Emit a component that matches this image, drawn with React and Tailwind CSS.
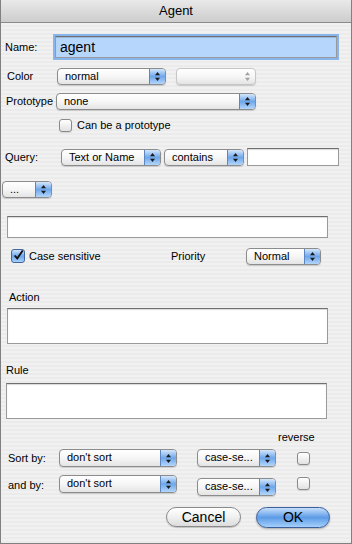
import React from "react";

function Arrows({ dim }) {
  const c = dim ? "#a0a0a0" : "#1a1a1a";
  return (
    <svg width="7" height="11" viewBox="0 0 7 11">
      <path d="M3.5 1 L6 4.2 L1 4.2 Z" fill={c} />
      <path d="M3.5 10 L6 6.8 L1 6.8 Z" fill={c} />
    </svg>
  );
}

function Popup({ label, w, h = "h-[17px]", disabled }) {
  return (
    <div className={`flex ${w} ${h} items-stretch overflow-hidden rounded-[4px] border ${disabled ? "border-[#c6c6c6]" : "border-[#8c8c8c]"} bg-gradient-to-b from-white via-[#f6f6f6] to-[#e4e4e4] shadow-[0_1px_1px_rgba(0,0,0,0.15)]`}>
      <span className="flex-1 truncate pl-[7px] text-[11px] leading-[15px] text-black">{label}</span>
      {disabled ? (
        <span className="flex w-[16px] items-center justify-center"><Arrows dim /></span>
      ) : (
        <span className="flex w-[16px] items-center justify-center border-l border-[#5b86c2] bg-gradient-to-b from-[#d4e7fb] via-[#6ea6ea] to-[#b3d6fb]"><Arrows /></span>
      )}
    </div>
  );
}

function Field({ w, h, children, focus }) {
  return (
    <div className={`${w} ${h} border border-[#9a9a9a] border-t-[#6f6f6f] ${focus ? "bg-[#b6d6fc] outline outline-2 outline-[#88b6ec]" : "bg-white"} shadow-[inset_0_1px_1px_rgba(0,0,0,0.15)]`}>
      {children}
    </div>
  );
}

function Check({ checked }) {
  return checked ? (
    <div className="flex h-[14px] w-[14px] items-center justify-center rounded-[3px] border border-[#40679c] bg-gradient-to-b from-[#cfe4fb] via-[#6ca5ea] to-[#a9d0fb]">
      <svg width="13" height="13" viewBox="0 0 13 13" className="-mt-[2px] ml-[1px]">
        <path d="M2 6.5 L5 10 L11.5 0.5" stroke="#111" strokeWidth="2.2" fill="none" />
      </svg>
    </div>
  ) : (
    <div className="h-[13px] w-[13px] rounded-[3px] border border-[#8a8a8a] bg-gradient-to-b from-white to-[#e2e2e2] shadow-[0_1px_1px_rgba(0,0,0,0.12)]" />
  );
}

export default function App() {
  return (
    <div className="h-[544px] w-[352px] overflow-hidden border-x border-b border-[#808080] bg-[repeating-linear-gradient(0deg,#ebebeb_0px,#ebebeb_2px,#f1f1f1_2px,#f1f1f1_4px)] font-['Liberation_Sans',Arial,sans-serif] text-[11px] text-black">
      <div className="flex h-[23px] items-center justify-center border-b border-[#8a8a8a] bg-gradient-to-b from-[#e9e9e9] to-[#cdcdcd] text-[13px]">
        Agent
      </div>

      <div className="mt-[11px] flex h-[26px] items-center">
        <span className="w-[54px] pl-[4px]">Name:</span>
        <Field w="w-[282px]" h="h-[22px]" focus>
          <span className="pl-[4px] text-[14px] leading-[20px]">agent</span>
        </Field>
      </div>

      <div className="mt-[6px] flex h-[20px] items-center">
        <span className="w-[56px] pl-[6px]">Color</span>
        <Popup label="normal" w="w-[109px]" />
        <div className="ml-[10px]"><Popup label="" w="w-[80px]" disabled /></div>
      </div>

      <div className="mt-[5px] flex h-[20px] items-center">
        <span className="w-[55px] pl-[5px]">Prototype</span>
        <Popup label="none" w="w-[200px]" />
      </div>

      <div className="mt-[4px] flex h-[20px] items-center pl-[58px]">
        <Check />
        <span className="ml-[5px]">Can be a prototype</span>
      </div>

      <div className="mt-[12px] flex h-[20px] items-center">
        <span className="w-[55px] pl-[4px]">Query:</span>
        <div className="ml-[5px]"><Popup label="Text or Name" w="w-[100px]" /></div>
        <div className="ml-[3px]"><Popup label="contains" w="w-[80px]" /></div>
        <div className="ml-[3px]"><Field w="w-[92px]" h="h-[18px]" /></div>
      </div>

      <div className="mt-[12px] flex h-[20px] items-center pl-[1px]">
        <Popup label="..." w="w-[50px]" />
      </div>

      <div className="mt-[17px] flex h-[22px] pl-[6px]">
        <Field w="w-[321px]" h="h-[22px]" />
      </div>

      <div className="mt-[8px] flex h-[20px] items-center">
        <div className="flex w-[170px] items-center pl-[10px]">
          <Check checked />
          <span className="ml-[4px]">Case sensitive</span>
        </div>
        <span className="w-[75px]">Priority</span>
        <Popup label="Normal" w="w-[75px]" />
      </div>

      <div className="mt-[24px] h-[14px] pl-[8px] leading-[14px]">Action</div>
      <div className="mt-[4px] pl-[6px]">
        <Field w="w-[321px]" h="h-[36px]" />
      </div>

      <div className="mt-[19px] h-[14px] pl-[5px] leading-[14px]">Rule</div>
      <div className="mt-[6px] pl-[5px]">
        <Field w="w-[321px]" h="h-[36px]" />
      </div>

      <div className="mt-[11px] h-[14px] pl-[277px] leading-[14px]">reverse</div>

      <div className="mt-[4px] flex h-[20px] items-center">
        <span className="w-[58px] pl-[7px]">Sort by:</span>
        <Popup label="don't sort" w="w-[118px]" h="h-[18px]" />
        <div className="ml-[20px]"><Popup label="case-se..." w="w-[79px]" h="h-[18px]" /></div>
        <div className="ml-[21px]"><Check /></div>
      </div>

      <div className="mt-[6px] flex h-[22px] items-start">
        <span className="mt-[3px] w-[58px] pl-[7px]">and by:</span>
        <div className="mt-[1px]"><Popup label="don't sort" w="w-[118px]" h="h-[18px]" /></div>
        <div className="ml-[20px] mt-[4px]"><Popup label="case-se..." w="w-[79px]" h="h-[18px]" /></div>
        <div className="ml-[21px] mt-[3px]"><Check /></div>
      </div>

      <div className="mt-[10px] flex h-[22px] items-center pl-[165px]">
        <button className="h-[20px] w-[75px] rounded-full border border-[#8a8a8a] bg-gradient-to-b from-white via-[#f0f0f0] to-[#dcdcdc] text-[14px] leading-[18px] shadow-[0_1px_1px_rgba(0,0,0,0.2)]">
          Cancel
        </button>
        <button className="ml-[15px] h-[21px] w-[74px] rounded-full border border-[#3a5f9a] bg-gradient-to-b from-[#c6e0fb] via-[#5d9be6] to-[#a4d0fb] text-[14px] leading-[19px] shadow-[0_1px_2px_rgba(0,0,0,0.3)]">
          OK
        </button>
      </div>
    </div>
  );
}
